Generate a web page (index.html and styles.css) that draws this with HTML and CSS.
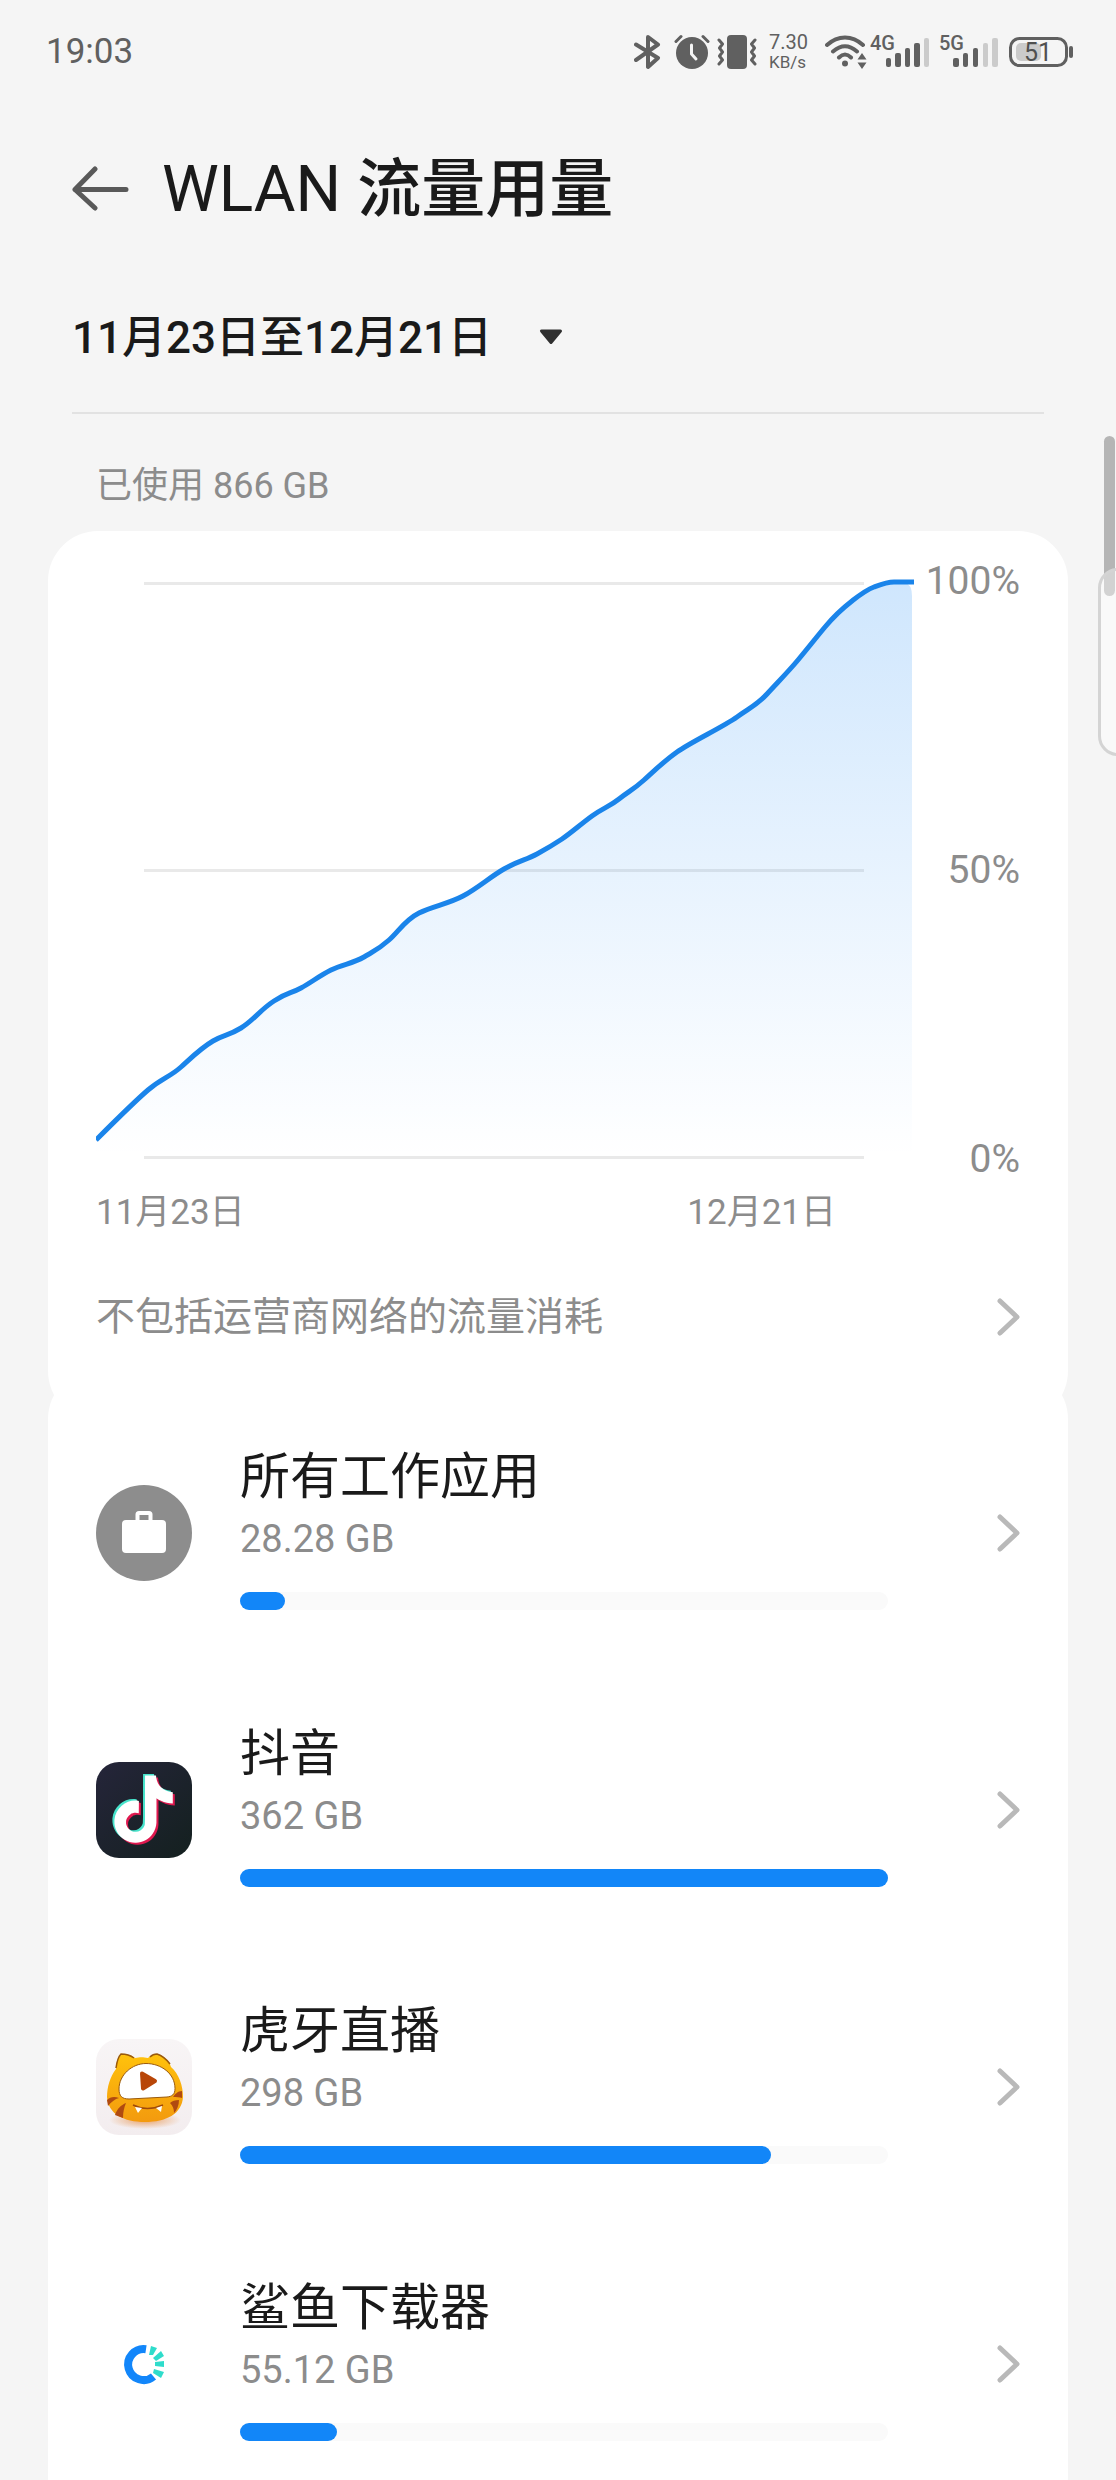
FILE: index.html
```html
<!DOCTYPE html>
<html lang="zh-CN">
<head>
<meta charset="utf-8">
<meta name="viewport" content="width=device-width, initial-scale=1">
<title>WLAN 流量用量</title>
<link rel="stylesheet" href="styles.css">
</head>
<body>
<svg class="defs" aria-hidden="true">
  <symbol id="chevron" viewBox="0 0 24 40"><path d="M4 4 21 20 4 36" fill="none" stroke="#b9b9b9" stroke-width="5" stroke-linecap="round" stroke-linejoin="round"/></symbol>
</svg>
<div class="screen">
  <div class="status-bar">
    <span class="clock">19:03</span>
    <div class="status-icons">
      <svg class="icon-bluetooth" width="27" height="40" viewBox="0 0 27 40"><path d="M2 12.500 24 26 14 35V5l10 7.500L2 28" fill="none" stroke="#606060" stroke-width="4" stroke-linecap="round" stroke-linejoin="round"/></svg>
      <svg class="icon-alarm" width="37" height="40" viewBox="0 0 37 40"><circle cx="18" cy="21" r="16" fill="#606060"/><path d="M2 9.500 7 4.500M34 9.500 29 4.500" stroke="#606060" stroke-width="3" stroke-linecap="round"/><path d="M17.500 13v9l4.500 5" fill="none" stroke="#f5f5f5" stroke-width="3" stroke-linecap="round" stroke-linejoin="round"/></svg>
      <svg class="icon-vibrate" width="40" height="40" viewBox="0 0 40 40"><rect x="10" y="3" width="20" height="34" rx="4" fill="#606060"/><path d="M2 8l3.500 4-3 4 3 4-3 4 3 4-3.500 4M38 8l-3.500 4 3 4-3 4 3 4-3 4 3.500 4" fill="none" stroke="#606060" stroke-width="3" stroke-linecap="round" stroke-linejoin="round"/></svg>
      <div class="net-speed"><span class="net-value">7.30</span><span class="net-unit">KB/s</span></div>
      <svg class="icon-wifi" width="42" height="40" viewBox="0 0 42 40"><path d="M2 13C13 3 27 3 38 13M8 19.500c8-7 16-7 24 0M14 25.500c4-4 8-4 12 0" fill="none" stroke="#606060" stroke-width="4" stroke-linecap="round"/><circle cx="20" cy="31.500" r="3" fill="#606060"/><path d="M37 21l4.500 6.500h-9zM37 37l-4.500-6.500h9z" fill="#606060"/></svg>
      <svg class="icon-signal" width="60" height="40" viewBox="0 0 60 40"><text x="0" y="18" class="signal-label">4G</text><g fill="#606060"><rect x="16" y="26" width="5" height="9" rx="2"/><rect x="25" y="21" width="6" height="14" rx="2"/><rect x="35" y="16" width="5" height="19" rx="2"/><rect x="44" y="11" width="6" height="24" rx="2"/></g><rect x="54" y="6" width="5" height="29" rx="2" fill="#cbcbcb"/></svg>
      <svg class="icon-signal" width="60" height="40" viewBox="0 0 60 40"><text x="0" y="18" class="signal-label">5G</text><g fill="#606060"><rect x="14" y="26" width="6" height="9" rx="2"/><rect x="24" y="21" width="5" height="14" rx="2"/><rect x="34" y="16" width="5" height="19" rx="2"/></g><g fill="#cbcbcb"><rect x="44" y="11" width="5" height="24" rx="2"/><rect x="53" y="6" width="6" height="29" rx="2"/></g></svg>
      <svg class="icon-battery" width="66" height="40" viewBox="0 0 66 40"><rect x="8" y="11" width="25" height="18" rx="5" fill="#cbcbcb"/><rect x="2.500" y="6.500" width="56" height="27" rx="9" fill="none" stroke="#606060" stroke-width="3"/><rect x="61" y="14" width="4" height="12" rx="2" fill="#606060"/><text x="30" y="29" text-anchor="middle" class="battery-label">51</text></svg>
    </div>
  </div>

  <header class="app-bar">
    <button class="back" type="button" aria-label="返回"><svg width="58" height="48" viewBox="0 0 58 48"><path d="M23 3 3 23.500 23 42M3 23.500h51" fill="none" stroke="#595959" stroke-width="5" stroke-linecap="round" stroke-linejoin="round"/></svg></button>
    <h1><span class="latin">WLAN</span> 流量用量</h1>
  </header>

  <main class="content">
    <div class="period">
      <label class="period-picker">
        <select aria-label="统计周期"><option>11月23日至12月21日</option></select>
        <svg class="caret" width="24" height="16" viewBox="0 0 24 16"><path d="M2.500 2h19L12 13.500z" fill="#303030" stroke="#303030" stroke-width="3" stroke-linejoin="round"/></svg>
      </label>
    </div>
    <p class="used">已使用 866 GB</p>

    <section class="card usage-card">
      <div class="chart">
        <svg class="plot" viewBox="0 -13 822 626" role="img" aria-label="流量使用趋势">
          <defs>
            <linearGradient id="area" x1="0" y1="0" x2="0" y2="1"><stop offset="0" stop-color="#1184f5" stop-opacity=".2"/><stop offset="1" stop-color="#1184f5" stop-opacity="0"/></linearGradient>
          </defs>
          <path d="M48 13.500H768M48 300.500H768M48 587.500H768" stroke="#e9e9e9" stroke-width="3"/>
          <path fill="url(#area)" d="M0 570C17 553 38 532 52 520S74 507 85 497S105 478 117 471S132 466 145 458S164 440 178 431S194 424 205 418S223 406 235 400S256 394 268 387S283 379 293 370S309 350 323 343S352 334 367 326S394 307 408 299S430 290 441 284S457 275 466 269S485 254 496 246S513 237 523 229S537 220 548 210S567 192 581 182S627 157 641 147S661 135 671 124S692 102 702 90S719 69 729 57S747 38 756 31S770 20 778 17S791 12 798 12H808Q816 14 816 26V587H0Z"/>
          <path fill="none" stroke="#1a84ea" stroke-width="5" stroke-linejoin="round" d="M0 570C17 553 38 532 52 520S74 507 85 497S105 478 117 471S132 466 145 458S164 440 178 431S194 424 205 418S223 406 235 400S256 394 268 387S283 379 293 370S309 350 323 343S352 334 367 326S394 307 408 299S430 290 441 284S457 275 466 269S485 254 496 246S513 237 523 229S537 220 548 210S567 192 581 182S627 157 641 147S661 135 671 124S692 102 702 90S719 69 729 57S747 38 756 31S770 20 778 17S791 12 798 12H818"/>
        </svg>
        <div class="y-axis"><span>100%</span><span>50%</span><span>0%</span></div>
      </div>
      <div class="x-axis"><span>11月23日</span><span>12月21日</span></div>
      <a class="note" href="#carrier">不包括运营商网络的流量消耗<svg width="24" height="40"><use href="#chevron"/></svg></a>
    </section>

    <section class="card apps">
      <a class="app" href="#work">
        <svg class="app-icon" viewBox="0 0 96 96"><circle cx="48" cy="48" r="48" fill="#8d8d8d"/><rect x="26" y="35" width="44" height="33" rx="4" fill="#fff"/><path d="M41.500 36v-6.500q0-1.500 1.500-1.500h10q1.500 0 1.500 1.500V36" fill="none" stroke="#fff" stroke-width="4"/></svg>
        <span class="app-info"><span class="app-name">所有工作应用</span><span class="app-size">28.28 GB</span><span class="track"><span class="fill" style="width:7%"></span></span></span>
        <svg width="24" height="40"><use href="#chevron"/></svg>
      </a>
      <a class="app" href="#douyin">
        <svg class="app-icon" viewBox="0 0 96 96">
          <defs>
            <linearGradient id="night" x1="0" y1="0" x2="1" y2="1"><stop offset="0" stop-color="#25253a"/><stop offset="1" stop-color="#14201f"/></linearGradient>
            <path id="note" d="M12.525.02c1.310-.02 2.610-.01 3.910-.02.08 1.530.63 3.090 1.750 4.170 1.120 1.110 2.700 1.620 4.240 1.790v4.030c-1.440-.05-2.890-.35-4.200-.97-.57-.26-1.100-.59-1.620-.93-.01 2.920.01 5.840-.02 8.750-.08 1.400-.54 2.790-1.350 3.940-1.310 1.920-3.580 3.170-5.910 3.210-1.430.08-2.860-.31-4.080-1.030-2.020-1.190-3.440-3.370-3.650-5.710-.02-.5-.03-1-.01-1.490.18-1.900 1.120-3.720 2.580-4.960 1.660-1.440 3.980-2.130 6.150-1.720.02 1.480-.04 2.960-.04 4.440-.99-.32-2.150-.23-3.020.37-.63.41-1.110 1.040-1.360 1.750-.21.51-.15 1.070-.14 1.610.24 1.640 1.820 3.020 3.500 2.870 1.120-.01 2.190-.66 2.770-1.610.19-.33.40-.67.41-1.060.10-1.790.06-3.570.07-5.360.01-4.030-.01-8.050.02-12.070z"/>
          </defs>
          <rect width="96" height="96" rx="23" fill="url(#night)"/>
          <use href="#note" transform="translate(16 15.500) scale(2.800)" fill="#e0184f"/>
          <use href="#note" transform="translate(12 12) scale(2.800)" fill="#47e3cb"/>
          <use href="#note" transform="translate(14 13.500) scale(2.800)" fill="#fff"/>
        </svg>
        <span class="app-info"><span class="app-name">抖音</span><span class="app-size">362 GB</span><span class="track"><span class="fill" style="width:100%"></span></span></span>
        <svg width="24" height="40"><use href="#chevron"/></svg>
      </a>
      <a class="app" href="#huya">
        <svg class="app-icon" viewBox="0 0 96 96">
          <defs>
            <linearGradient id="plate" x1="0" y1="0" x2="0" y2="1"><stop offset="0" stop-color="#f8f5f6"/><stop offset="1" stop-color="#f3edef"/></linearGradient>
            <linearGradient id="fur" x1="0" y1="0" x2="0" y2="1"><stop offset="0" stop-color="#ffc20c"/><stop offset="1" stop-color="#f39a0e"/></linearGradient>
            <radialGradient id="shade"><stop offset="0" stop-color="#e9a36a"/><stop offset="1" stop-color="#e9a36a" stop-opacity="0"/></radialGradient>
          </defs>
          <rect width="96" height="96" rx="23" fill="url(#plate)"/>
          <ellipse cx="49" cy="81" rx="36" ry="9" fill="url(#shade)"/>
          <path fill="url(#fur)" d="M20 30C20 23 22 18 26 15c5 0 9 1 13 4 5-1 8-1 13 0 3-3 6-4 9-4 7 2 12 6 14 13 8 7 12 19 12 30-1 17-17 25-38 25S12 75 11 58c0-10 3-20 9-28z"/>
          <path d="M20 29c1-7 3-12 5-14 6 0 9 1 13 4M54 18c2-2 5-3 7-3 6 2 10 6 13 10" fill="none" stroke="#9a5a0c" stroke-width="1.500"/>
          <path fill="#b04a10" d="M11 61c3-3 7-4 12-2-4 1-8 4-11 8zM19 76c2-6 6-10 11-12-2 5-3 9-3 15zM86 52c-4 0-7 3-9 6 3 0 7 0 9 1zM83 61c-4 0-7 1-9 3 3 3 4 6 4 10 3-3 5-8 5-13z"/>
          <path fill="#fff" stroke="#9a5a0c" stroke-width="1" d="M50 24.500c15 0 29 10 29 25 0 6-3 8-8 8.500l-38 2C26 60 23 57 23 50c0-14 13-25.500 27-25.500z"/>
          <path d="M46 34.500 59 42 47 49.500z" fill="#b84608" stroke="#b84608" stroke-width="4" stroke-linejoin="round"/>
          <path d="M37 66q14 7 30 0" fill="none" stroke="#a04a0a" stroke-width="1.500"/>
          <path d="M39 68l7 1-4 5zM60 69l6-2-1 6z" fill="#fff"/>
        </svg>
        <span class="app-info"><span class="app-name">虎牙直播</span><span class="app-size">298 GB</span><span class="track"><span class="fill" style="width:82%"></span></span></span>
        <svg width="24" height="40"><use href="#chevron"/></svg>
      </a>
      <a class="app" href="#shark">
        <svg class="app-icon" viewBox="0 0 96 96"><path d="M50 33.200A15.500 15.500 0 1 0 57.500 60.500" fill="none" stroke="#1286fa" stroke-width="8"/><g fill="#2fdccb"><path d="M55 30l6 2-4 7h-4z"/><path d="M65 35l3 5-8 5-3-3z"/><path d="M68 45v6l-9-1v-4z"/><path d="M58 53l10 3-3 6-8-5z"/></g></svg>
        <span class="app-info"><span class="app-name">鲨鱼下载器</span><span class="app-size">55.12 GB</span><span class="track"><span class="fill" style="width:15%"></span></span></span>
        <svg width="24" height="40"><use href="#chevron"/></svg>
      </a>
    </section>
  </main>
  <div class="scroll-thumb"></div>
  <div class="edge-handle"></div>
</div>
</body>
</html>
```
FILE: styles.css
```css
* { box-sizing: border-box; }

body {
  margin: 0;
  background: #f5f5f5;
  color: #1a1a1a;
  font-family: Roboto, "Noto Sans CJK SC", sans-serif;
}

a { color: inherit; text-decoration: none; }
svg { display: block; flex: none; }
.defs { width: 0; height: 0; position: absolute; }

.screen {
  position: relative;
  display: flex;
  flex-direction: column;
  height: 100vh;
  overflow: hidden;
}

/* Status bar */
.status-bar {
  display: flex;
  flex: none;
  align-items: center;
  justify-content: space-between;
  height: 104px;
  padding: 0 42px 0 46px;
  color: #606060;
}
.clock { font-size: 35px; line-height: 48px; }
.status-icons { display: flex; align-items: center; }
.icon-alarm { margin-left: 13px; }
.icon-vibrate { margin-left: 6px; }
.net-speed {
  display: flex;
  flex-direction: column;
  width: 42px;
  margin: 0 14px 0 12px;
}
.net-value { font-size: 20px; line-height: 20px; }
.net-unit { font-size: 17px; line-height: 20px; }
.icon-signal { margin-left: 3px; }
.icon-signal + .icon-signal,
.icon-battery { margin-left: 9px; }
.signal-label { font-size: 20px; font-weight: 500; fill: #606060; }
.battery-label { font-size: 25px; fill: #505050; }

/* Title */
.app-bar {
  display: flex;
  flex: none;
  align-items: center;
  gap: 32px;
  height: 172px;
  padding: 0 72px;
}
.back { padding: 0; border: 0; background: none; }
h1 { margin: 0; font-size: 64px; font-weight: 500; line-height: 80px; }
.latin { font-weight: 400; }

/* Scrolling content */
.content {
  flex: 1;
  min-height: 0;
  overflow-y: auto;
  scrollbar-width: none;
}
.period {
  height: 138px;
  margin: 0 72px;
  border-bottom: 2px solid #e2e2e2;
}
.period-picker { display: inline-grid; align-items: center; height: 122px; }
.period-picker > * { grid-area: 1 / 1; }
.period-picker select {
  appearance: none;
  padding: 2px 70px 0 0;
  border: 0;
  background: none;
  color: #1a1a1a;
  font: 500 44px/64px Roboto, "Noto Sans CJK SC", sans-serif;
}
.caret { justify-self: end; pointer-events: none; }
.used {
  margin: 0 96px;
  padding: 48px 0 21px;
  color: #8c8c8c;
  font-size: 36px;
  line-height: 48px;
}

.card {
  margin: 0 48px;
  padding: 26px 48px 56px;
  border-radius: 50px;
  background: #fff;
}

/* Chart */
.chart { display: flex; gap: 8px; }
.plot { flex: 1; min-width: 0; }
.y-axis {
  display: flex;
  flex-direction: column;
  justify-content: space-between;
  align-items: flex-end;
  width: 94px;
  color: #8c8c8c;
  font-size: 39px;
  line-height: 48px;
}
.x-axis {
  display: flex;
  justify-content: space-between;
  margin-top: 6px;
  padding-right: 184px;
  color: #8c8c8c;
  font-size: 35px;
  line-height: 48px;
}
.note {
  display: flex;
  align-items: center;
  justify-content: space-between;
  height: 96px;
  margin-top: 32px;
  color: #8c8c8c;
  font-size: 39px;
  line-height: 48px;
}

/* App list, tucked under the rounded end of the chart card */
.apps { margin-top: -52px; padding: 25px 48px; }
.app { display: flex; align-items: center; height: 277px; }
.app-icon { width: 96px; height: 96px; }
.app-info {
  display: flex;
  flex: 1;
  flex-direction: column;
  margin: 0 108px 12px 48px;
}
.app-name { font-size: 50px; line-height: 66px; }
.app-size {
  margin: 5px 0 29px;
  color: #8c8c8c;
  font-size: 38px;
  line-height: 48px;
}
.track { display: block; height: 18px; border-radius: 9px; background: #fafafa; }
.fill { display: block; height: 100%; border-radius: 9px; background: #1286f8; }

/* Overlays on the right edge */
.scroll-thumb {
  position: absolute;
  top: 436px;
  right: 1px;
  width: 11px;
  height: 160px;
  border-radius: 6px;
  background: #b5b5b5;
}
.edge-handle {
  position: absolute;
  top: 568px;
  right: -22px;
  width: 40px;
  height: 188px;
  border: 3px solid #d4d4d4;
  border-radius: 24px;
  background: rgba(255, 255, 255, .4);
}
```
